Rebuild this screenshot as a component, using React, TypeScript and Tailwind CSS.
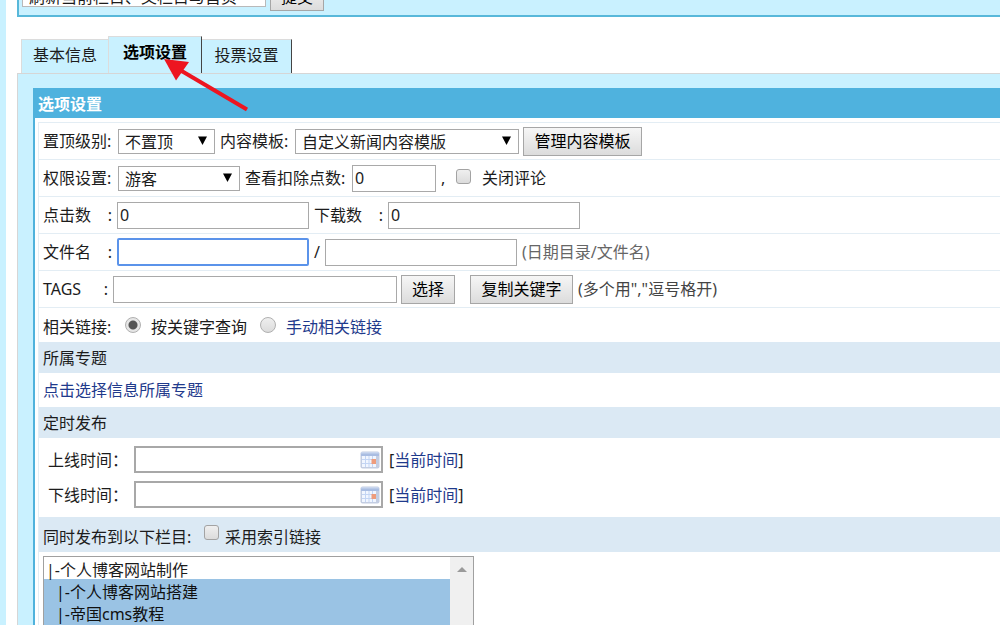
import type { ReactNode } from 'react';
import clsx from 'clsx';

const inputClass = 'h-[27px] border border-[#a9a9a9] bg-white px-0.5 outline-none';

const columns = [
  { id: 'make', label: '|-个人博客网站制作', child: false },
  { id: 'build', label: '|-个人博客网站搭建', child: true },
  { id: 'cms', label: '|-帝国cms教程', child: true },
  { id: 'seo', label: '|-网站优化', child: true },
];

function Btn({ children, className }: { children: ReactNode; className?: string }) {
  return (
    <button
      type="button"
      className={clsx(
        'h-[29px] shrink-0 whitespace-nowrap border border-[#a6a6a6] bg-linear-to-b from-[#f6f6f6] to-[#dcdcdc] text-center text-black',
        className
      )}
    >
      {children}
    </button>
  );
}

function Select({ id, label, option, className }: { id: string; label: string; option: string; className: string }) {
  return (
    <span className={clsx('relative shrink-0', className)}>
      <select
        id={id}
        aria-label={label}
        className="block h-[25px] w-full appearance-none border border-[#a9a9a9] bg-white pl-1.5 leading-6 outline-none"
      >
        <option>{option}</option>
      </select>
      <svg viewBox="0 0 9 9" className="pointer-events-none absolute top-[7px] right-2 size-[9px]">
        <path d="M0 0.5h9L4.500 9z" fill="#000" />
      </svg>
    </span>
  );
}

function Checkbox({ id }: { id: string }) {
  return (
    <input
      id={id}
      type="checkbox"
      className="mb-1 size-[15px] shrink-0 appearance-none rounded-[3px] border border-[#a3a3a3] bg-linear-to-b from-[#efefef] to-[#dcdcdc]"
    />
  );
}

function Radio({ id, checked }: { id: string; checked?: boolean }) {
  return (
    <input
      id={id}
      type="radio"
      name="related"
      defaultChecked={checked}
      className="mb-1 size-4 shrink-0 appearance-none rounded-full border border-[#b0b0b0] bg-linear-to-b from-[#efefef] to-[#dcdcdc] checked:bg-[radial-gradient(circle,#555_4px,#e6e6e6_5px)]"
    />
  );
}

function Row({ children }: { children: ReactNode }) {
  return (
    <div className="flex h-[37px] items-center border-b border-[#e3edf4] pl-1 whitespace-nowrap">{children}</div>
  );
}

function Band({ children, className }: { children: ReactNode; className?: string }) {
  return <h2 className={clsx('flex items-center bg-[#dbe9f4] pl-1', className)}>{children}</h2>;
}

// label with its colon pushed to the right edge
function SpreadLabel({ htmlFor, text, className }: { htmlFor: string; text: string; className: string }) {
  return (
    <label htmlFor={htmlFor} className={clsx('flex shrink-0 justify-between', className)}>
      <span>{text}</span>
      <span>:</span>
    </label>
  );
}

function CalendarIcon() {
  return (
    <svg viewBox="0 0 20 18" className="h-[18px] w-5 shrink-0">
      <rect x="0.5" y="0.5" width="19" height="17" rx="2" fill="#c3cde2" />
      <path d="M1 1h18v4H1z" fill="#a9bde2" />
      <path d="M1 1h18v1.500H1z" fill="#c9d6ee" />
      <rect x="2" y="5" width="14" height="11" fill="#f1f6ff" />
      <path d="M2 8.500h14M2 12.500h14M5.500 5v11M9 5v11M12.500 5v11" stroke="#c3d5f4" strokeWidth="1" />
      <rect x="11.5" y="8" width="4.500" height="5" fill="#ee9c7c" />
    </svg>
  );
}

function TimeRow({ id, label }: { id: string; label: string }) {
  return (
    <div className="flex h-[27px] items-center pl-[9px]">
      <label htmlFor={id} className="w-[86px]">{label}</label>
      <span className="flex h-[27px] w-[249px] items-center border-2 border-[#a8a8a8] bg-white pr-px">
        <input id={id} type="text" className="min-w-0 flex-1 px-0.5 outline-none" />
        <CalendarIcon />
      </span>
      <span className="pl-1.5">
        [<a href="#now" className="text-[#1f3a8c]">当前时间</a>]
      </span>
    </div>
  );
}

function Arrow() {
  return (
    <svg viewBox="0 0 86 54" className="pointer-events-none absolute top-[23px] left-[147px] h-[54px] w-[86px]">
      <path d="M16 11L83 50.500" stroke="#ed1520" strokeWidth="4" />
      <path d="M0 0L25 3L12 21.500z" fill="#ed1520" />
    </svg>
  );
}

function Tabs() {
  return (
    <nav className="relative flex items-end pl-1">
      <a href="#base" className="flex h-[34px] w-[87px] items-center justify-center border-t border-l border-[#dcdcdc] bg-[#c9f1ff] pb-1">
        基本信息
      </a>
      <a
        href="#options"
        className="flex h-[37px] w-[94px] items-center justify-center border-t border-r border-l border-t-[#dcdcdc] border-r-[#444] border-l-[#dcdcdc] bg-[#c9f1ff] pb-1.5 font-bold text-black"
      >
        选项设置
      </a>
      <a href="#vote" className="flex h-[34px] w-[90px] items-center justify-center border-t border-r border-t-[#dcdcdc] border-r-[#444] bg-[#c9f1ff] pb-1">
        投票设置
      </a>
      <Arrow />
    </nav>
  );
}

export default function App() {
  return (
    <div className="flex h-screen overflow-hidden bg-white font-['Noto_Sans','Noto_Sans_CJK_SC',sans-serif] text-base leading-6 text-[#1c1c1c]">
      <div className="w-1.5 shrink-0 bg-[#c9f1ff]" />
      <main className="ml-[11px] flex min-w-0 flex-1 flex-col">
        <div className="flex h-[17px] shrink-0 items-end gap-1 border-b-2 border-l-2 border-[#58b8da] bg-[#c9f1ff] pb-1 pl-[3px]">
          <select
            aria-label="刷新"
            className="mb-1 h-[25px] w-[244px] shrink-0 appearance-none border border-[#b9b9b9] bg-white pt-0.5 pl-1.5 leading-6"
          >
            <option>刷新当前栏目、父栏目与首页</option>
          </select>
          <Btn className="w-[54px]">提交</Btn>
        </div>

        <div className="h-[19px] shrink-0" />
        <Tabs />

        <div className="flex flex-1 flex-col border-t border-l border-[#d6d6d6] bg-[#c9f1ff] pt-3.5 pl-[15px]">
          <form className="flex-1 border-l-2 border-[#4fb2dc] bg-white">
            <h1 className="h-[30px] bg-[#4fb2de] pt-1 pl-[3px] font-bold text-white">选项设置</h1>
            <div className="mt-1 ml-[3px] border-t border-l border-[#e3edf4]">
              <Row>
                <label htmlFor="top" className="w-[75px] shrink-0">置顶级别:</label>
                <Select id="top" label="置顶级别" option="不置顶" className="w-[97px]" />
                <label htmlFor="template" className="w-[76px] shrink-0 pl-[5px]">内容模板:</label>
                <Select id="template" label="内容模板" option="自定义新闻内容模版" className="ml-1 w-[224px]" />
                <Btn className="ml-1 w-[119px]">管理内容模板</Btn>
              </Row>
              <Row>
                <label htmlFor="group" className="w-[75px] shrink-0">权限设置:</label>
                <Select id="group" label="权限设置" option="游客" className="w-[122px]" />
                <label htmlFor="points" className="w-[112px] shrink-0 pl-[5px]">查看扣除点数:</label>
                <input id="points" type="text" defaultValue="0" className={clsx(inputClass, 'w-[84px]')} />
                <span className="w-5 pl-[5px]">,</span>
                <Checkbox id="closepl" />
                <label htmlFor="closepl" className="pl-[11px]">关闭评论</label>
              </Row>
              <Row>
                <SpreadLabel htmlFor="clicks" text="点击数" className="w-[69px]" />
                <input id="clicks" type="text" defaultValue="0" className={clsx(inputClass, 'ml-[5px] w-[192px]')} />
                <SpreadLabel htmlFor="downs" text="下载数" className="ml-[5px] w-[69px]" />
                <input id="downs" type="text" defaultValue="0" className={clsx(inputClass, 'ml-[5px] w-[192px]')} />
              </Row>
              <Row>
                <SpreadLabel htmlFor="path" text="文件名" className="w-[69px]" />
                <input
                  id="path"
                  type="text"
                  className="ml-[5px] h-7 w-[192px] rounded-xs border-2 border-[#5b93ea] bg-white px-0.5 outline-none"
                />
                <span className="w-4 text-center">/</span>
                <input type="text" aria-label="文件名" className={clsx(inputClass, 'w-[192px]')} />
                <span className="pl-[5px] text-[#666]">(日期目录/文件名)</span>
              </Row>
              <Row>
                <SpreadLabel htmlFor="tags" text="TAGS" className="w-[65px]" />
                <input id="tags" type="text" className={clsx(inputClass, 'ml-[5px] w-[284px]')} />
                <Btn className="ml-1 w-[54px]">选择</Btn>
                <Btn className="ml-[15px] w-[103px]">复制关键字</Btn>
                <span className="pl-[5px] text-[#444]">(多个用","逗号格开)</span>
              </Row>
              <div className="flex h-[34px] items-center pt-1 pl-1">
                <span className="w-[82px]">相关链接:</span>
                <Radio id="bykey" checked />
                <label htmlFor="bykey" className="w-[119px] pl-2.5">按关键字查询</label>
                <Radio id="manual" />
                <label htmlFor="manual" className="pl-2.5 text-[#1f3a8c]">手动相关链接</label>
              </div>

              <Band className="h-[31px]">所属专题</Band>
              <div className="flex h-[34px] items-center pl-1">
                <a href="#topic" className="text-[#1f3a8c]">点击选择信息所属专题</a>
              </div>
              <Band className="h-[31px]">定时发布</Band>

              <div className="flex flex-col gap-2 py-2 pb-[9px]">
                <TimeRow id="online" label="上线时间：" />
                <TimeRow id="offline" label="下线时间：" />
              </div>

              <Band className="h-[35px]">
                <span className="w-[161px] pt-1">同时发布到以下栏目:</span>
                <Checkbox id="index" />
                <label htmlFor="index" className="pt-1 pl-1.5">采用索引链接</label>
              </Band>

              <div className="mt-1 ml-1 flex w-[431px] border border-[#a0a0a0]">
                <select
                  multiple
                  size={4}
                  aria-label="同时发布到以下栏目"
                  defaultValue={['build', 'cms', 'seo']}
                  className="h-[180px] flex-1 overflow-hidden bg-white outline-none"
                >
                  {columns.map((c) => (
                    <option
                      key={c.id}
                      value={c.id}
                      className={clsx(
                        'h-[22px] leading-5',
                        c.child ? 'bg-[linear-gradient(#9ac3e4,#9ac3e4)] pl-3' : 'pl-0.5'
                      )}
                    >
                      {c.label}
                    </option>
                  ))}
                </select>
                <div className="flex w-[23px] justify-center bg-[#f0f0f0] pt-2.5">
                  <svg viewBox="0 0 10 5" className="h-[5px] w-2.5">
                    <path d="M5 0l5 5H0z" fill="#9a9a9a" />
                  </svg>
                </div>
              </div>
            </div>
          </form>
        </div>
      </main>
    </div>
  );
}
